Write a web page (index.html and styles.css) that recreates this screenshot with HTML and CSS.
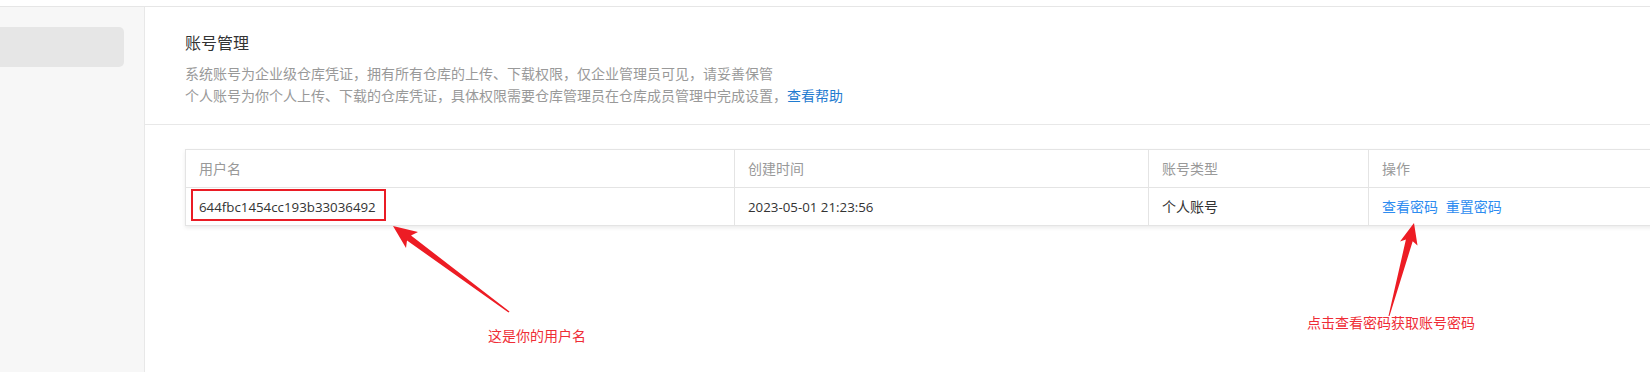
FILE: index.html
```html
<!DOCTYPE html>
<html lang="zh-CN"><head>
    <meta charset="UTF-8">
    <meta name="viewport" content="width=device-width, initial-scale=1.0">
    <title>账号管理</title>
    <link rel="stylesheet" href="styles.css">
  </head>
  <body>
    <!-- Top bar -->
    <div class="topbar"></div>

    <div class="layout">
      <!-- Sidebar -->
      <aside class="sidebar">
        <div class="menu-item active"></div>
      </aside>

      <!-- Main content -->
      <main class="main">
        <section class="intro">
          <h2>账号管理</h2>
          <p>系统账号为企业级仓库凭证，拥有所有仓库的上传、下载权限，仅企业管理员可见，请妥善保管</p>
          <p>个人账号为你个人上传、下载的仓库凭证，具体权限需要仓库管理员在仓库成员管理中完成设置，<a href="#" class="help-link">查看帮助</a></p>
        </section>

        <section class="accounts">
          <table class="account-table">
            <colgroup>
              <col class="col-name">
              <col class="col-time">
              <col class="col-type">
              <col class="col-action">
            </colgroup>
            <thead>
              <tr>
                <th>用户名</th>
                <th>创建时间</th>
                <th>账号类型</th>
                <th>操作</th>
              </tr>
            </thead>
            <tbody>
              <tr>
                <td><span class="latin">644fbc1454cc193b33036492</span></td>
                <td><span class="latin">2023-05-01 21:23:56</span></td>
                <td>个人账号</td>
                <td>
                  <a href="#" class="action">查看密码</a>
                  <a href="#" class="action">重置密码</a>
                </td>
              </tr>
            </tbody>
          </table>
        </section>
      </main>
    </div>

    <!-- Annotations drawn over the screenshot -->
    <svg class="annot" width="1650" height="372" viewBox="0 0 1650 372">
      <rect x="192" y="190" width="193" height="30" fill="none" stroke="#ea1c25" stroke-width="2"></rect>
      <polygon fill="#ed1c24" points="393,226 418,232 411,235.5 509.5,311.5 508.5,312.5 407,240.5 406,248"></polygon>
      <polygon fill="#ed1c24" points="1414,223 1417.5,245.5 1412.7,241.3 1389.5,316 1388.5,316 1405.9,239.5 1400,241.5"></polygon>
    </svg>
    <div class="note note-user">这是你的用户名</div>
    <div class="note note-pass">点击查看密码获取账号密码</div>
  </body></html>
```

FILE: styles.css
```css
/* General Styling */
body {
  font-family: "Open Sans", "Noto Sans CJK SC", sans-serif;
  font-size: 14px;
  margin: 0;
  padding: 0;
  width: 1650px;
  height: 372px;
  overflow: hidden;
  position: relative;
  background-color: #ffffff;
  color: #333;
}

/* Top bar */
.topbar {
  height: 6px;
  border-bottom: 1px solid #e6e6e6;
  background: #ffffff;
}

.layout {
  display: flex;
  height: 365px;
}

/* Sidebar */
.sidebar {
  width: 144px;
  flex-shrink: 0;
  background-color: #f7f7f7;
  border-right: 1px solid #e8e8e8;
  padding-top: 20px;
  box-sizing: content-box;
}

.menu-item {
  height: 40px;
  width: 130px;
  margin-left: -6px;
  border-radius: 5px;
}

.menu-item.active {
  background-color: #e6e6e6;
}

/* Main */
.main {
  flex: 1;
  min-width: 0;
  overflow: hidden;
}

.intro {
  padding: 24px 0 17px 40px;
  border-bottom: 1px solid #e8e8e8;
}

.intro h2 {
  margin: 0 0 8px;
  font-size: 16px;
  line-height: 24px;
  font-weight: normal;
  color: #333;
}

.intro p {
  margin: 0;
  line-height: 22px;
  color: #999;
}

.help-link {
  color: #1f7bd0;
  text-decoration: none;
}

/* Account table */
.accounts {
  padding: 24px 0 0 40px;
}

.account-table {
  width: 1503px;
  font-size: 14px;
  table-layout: fixed;
  border-collapse: collapse;
  border: 1px solid #e4e4e4;
  box-shadow: 0 2px 4px rgba(0, 0, 0, 0.08);
}

.col-name { width: 549px; }
.col-time { width: 414px; }
.col-type { width: 220px; }
.col-action { width: 320px; }

.account-table th,
.account-table td {
  text-align: left;
  padding: 0 13px;
  line-height: 20px;
  border: 1px solid #e4e4e4;
  white-space: nowrap;
}

.account-table th {
  height: 37px;
  font-weight: normal;
  color: #999;
}

.account-table td {
  height: 37px;
  color: #333;
}

.latin {
  font-size: 13.3px;
}

.action {
  color: #2d8cf0;
  text-decoration: none;
  margin-right: 4px;
}

/* Annotation layer */
.annot {
  position: absolute;
  left: 0;
  top: 0;
  pointer-events: none;
}

.note {
  position: absolute;
  font-size: 14px;
  line-height: 20px;
  color: #ef2d36;
  white-space: nowrap;
}

.note-user {
  left: 488px;
  top: 326px;
}

.note-pass {
  left: 1307px;
  top: 313px;
}
```
